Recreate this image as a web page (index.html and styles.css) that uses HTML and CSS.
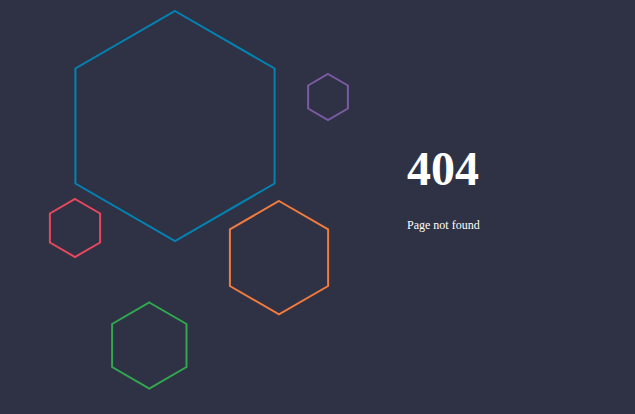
FILE: index.html
```html
<!DOCTYPE html>
<html lang="en">
<head>
<meta charset="utf-8">
<title>404</title>
<link rel="stylesheet" href="styles.css">
</head>
<body>
<main class="page">
  <svg class="art" width="350" height="414" viewBox="0 0 350 414" aria-hidden="true">
    <polygon class="hex hex-blue" points="175,11 274.6,68.5 274.6,183.5 175,241 75.4,183.5 75.4,68.5"/>
    <polygon class="hex hex-purple" points="328,74 347.9,85.5 347.9,108.5 328,120 308.1,108.5 308.1,85.5"/>
    <polygon class="hex hex-red" points="75,199 100.1,213.5 100.1,242.5 75,257 49.9,242.5 49.9,213.5"/>
    <polygon class="hex hex-orange" points="279,201 328.1,229.3 328.1,286 279,314.3 229.9,286 229.9,229.3"/>
    <polygon class="hex hex-green" points="149.3,302.5 186.5,324 186.5,367 149.3,388.5 112.1,367 112.1,324"/>
  </svg>
  <section class="info">
    <h1 class="code">404</h1>
    <p class="msg">Page not found</p>
  </section>
</main>
</body>
</html>
```
FILE: styles.css
```css
html, body {
  margin: 0;
  padding: 0;
}
body {
  background: #2f3244;
  font-family: "Liberation Serif", "Times New Roman", serif;
  color: #ffffff;
}
.page {
  display: flex;
  width: 635px;
  height: 414px;
  overflow: hidden;
}
.art {
  flex: none;
  display: block;
}
.hex {
  fill: none;
  stroke-width: 2;
  stroke-linejoin: miter;
}
.hex-blue { stroke: #0382b4; }
.hex-purple { stroke: #7a5ba3; }
.hex-red { stroke: #e8485e; }
.hex-orange { stroke: #f17a3e; }
.hex-green { stroke: #2fa84f; }
.info {
  margin-left: 57px;
  padding-top: 145px;
}
.code {
  margin: 0;
  font-size: 48px;
  line-height: 48px;
  font-weight: bold;
}
.msg {
  margin: 25px 0 0;
  font-size: 12px;
  line-height: 14px;
}
```
